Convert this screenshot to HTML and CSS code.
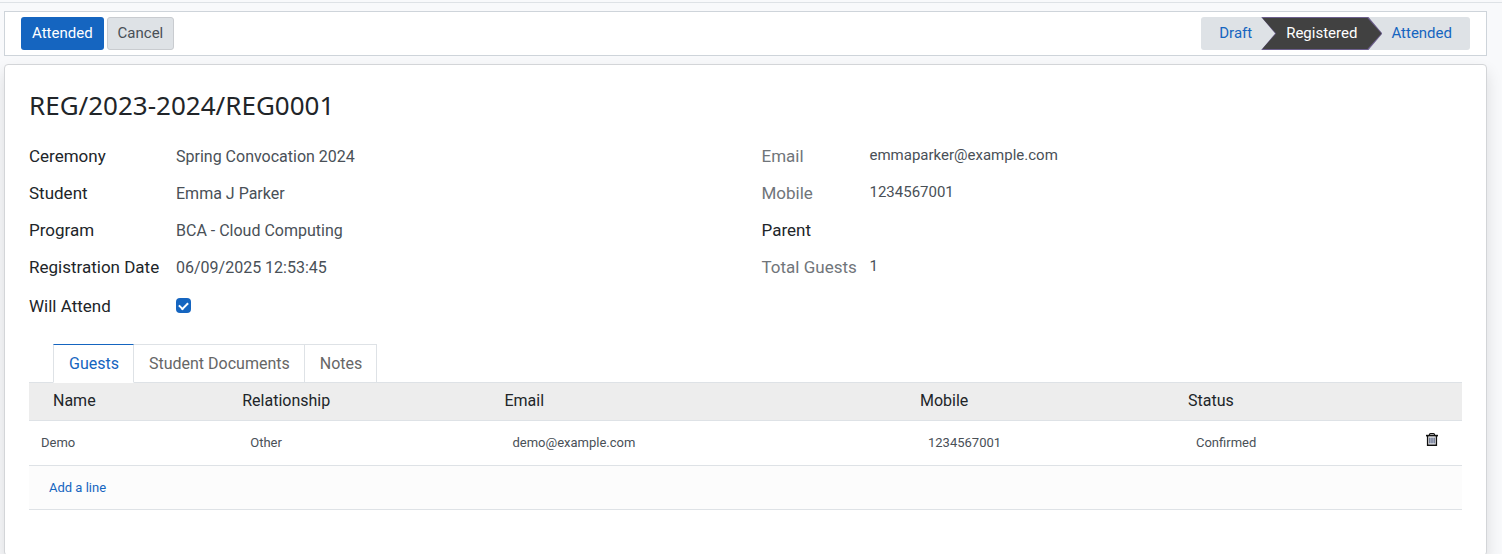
FILE: index.html
```html
<!DOCTYPE html>
<html lang="en">
<head>
    <meta charset="UTF-8">
    <meta name="viewport" content="width=device-width, initial-scale=1.0">
    <title>REG/2023-2024/REG0001</title>
    <link rel="stylesheet" href="styles.css">
</head>
<body>
    <main class="form-view">
        <div class="statusbar">
            <div class="statusbar-buttons">
                <button type="button" class="btn btn-primary">Attended</button>
                <button type="button" class="btn btn-secondary">Cancel</button>
            </div>
            <div class="status-steps">
                <button type="button" class="step step-first">Draft</button>
                <button type="button" class="step step-current" aria-current="step"><span>Registered</span></button>
                <button type="button" class="step step-last">Attended</button>
            </div>
        </div>

        <div class="sheet">
            <h1>REG/2023-2024/REG0001</h1>

            <div class="groups">
                <div class="group group-main">
                    <div class="label">Ceremony</div>
                    <div class="value">Spring Convocation 2024</div>
                    <div class="label">Student</div>
                    <div class="value">Emma J Parker</div>
                    <div class="label">Program</div>
                    <div class="value">BCA - Cloud Computing</div>
                    <div class="label">Registration Date</div>
                    <div class="value">06/09/2025 12:53:45</div>
                    <label class="label" for="will-attend">Will Attend</label>
                    <input type="checkbox" id="will-attend" checked>
                </div>
                <div class="group group-contact">
                    <div class="label readonly">Email</div>
                    <div class="value">emmaparker@example.com</div>
                    <div class="label readonly">Mobile</div>
                    <div class="value">1234567001</div>
                    <div class="label">Parent</div>
                    <div class="value"></div>
                    <div class="label readonly">Total Guests</div>
                    <div class="value">1</div>
                </div>
            </div>

            <div class="tabs" role="tablist">
                <button type="button" class="tab active" role="tab" aria-selected="true">Guests</button>
                <button type="button" class="tab" role="tab" aria-selected="false">Student Documents</button>
                <button type="button" class="tab" role="tab" aria-selected="false">Notes</button>
            </div>

            <table class="guests">
                <thead>
                    <tr>
                        <th class="col-name">Name</th>
                        <th class="col-relationship">Relationship</th>
                        <th class="col-email">Email</th>
                        <th class="col-mobile">Mobile</th>
                        <th class="col-status">Status</th>
                        <th class="col-action"></th>
                    </tr>
                </thead>
                <tbody>
                    <tr>
                        <td>Demo</td>
                        <td>Other</td>
                        <td>demo@example.com</td>
                        <td>1234567001</td>
                        <td>Confirmed</td>
                        <td class="action">
                            <button type="button" class="delete" aria-label="Delete row">
                                <svg width="12" height="13" viewBox="0 0 12 13" fill="none" stroke="#111">
                                    <path d="M0 2.6h12" stroke-width="1.6"/>
                                    <path d="M3.5 2.5V1.6q0-1 1-1h3q1 0 1 1v.9" stroke-width="1.2"/>
                                    <path d="M1.6 3v9.3h8.8V3" stroke-width="1.4"/>
                                    <path d="M3.9 4.5v6M6 4.5v6M8.1 4.5v6" stroke="#3d4a70" stroke-width="1.2"/>
                                </svg>
                            </button>
                        </td>
                    </tr>
                    <tr class="add-row">
                        <td colspan="6"><a href="#">Add a line</a></td>
                    </tr>
                </tbody>
            </table>
        </div>
    </main>
</body>
</html>
```
FILE: styles.css
```css
* {
    box-sizing: border-box;
}
body {
    margin: 0;
    font-family: Roboto, "Liberation Sans", sans-serif;
    font-size: 16px;
    color: #212529;
    background-color: #f8f9fb;
}
button {
    font-family: inherit;
    cursor: pointer;
}
.form-view {
    display: flex;
    flex-direction: column;
    gap: 8px;
    min-height: 100vh;
    margin-top: 2px;
    padding: 8px 15px 0 4px;
    border-top: 1px solid #dee2e6;
    overflow: hidden;
}

/* status bar */
.statusbar {
    display: flex;
    justify-content: space-between;
    padding: 5px 16px;
    background-color: #fff;
    border: 1px solid #ced4da;
}
.statusbar-buttons {
    display: flex;
    gap: 3px;
}
.btn {
    height: 33px;
    padding: 0 10px 2px;
    font-size: 15px;
    border: 1px solid transparent;
    border-radius: 3px;
}
.btn-primary {
    color: #fff;
    background-color: #1565c0;
}
.btn-secondary {
    color: #495057;
    background-color: #dee2e6;
    border-color: #c9ccd0;
}
.status-steps {
    display: flex;
    height: 33px;
    background-color: #dee2e6;
    border-radius: 3px;
}
.step {
    padding: 0;
    font-size: 15px;
    color: #1565c0;
    background: none;
    border: 0;
}
.step-first {
    padding: 0 9px 2px 18px;
}
.step-last {
    padding: 0 18px 2px 9px;
}
.step-current {
    padding: 1px;
    color: #fff;
    background-color: #6c5f8d;
}
.step-current span {
    display: block;
    padding: 0 24px;
    line-height: 31px;
    background-color: #414141;
}
.step-current,
.step-current span {
    clip-path: polygon(0 0, calc(100% - 14px) 0, 100% 50%, calc(100% - 14px) 100%, 0 100%, 14px 50%);
}

/* sheet */
.sheet {
    flex: 1;
    padding: 23px 24px;
    background-color: #fff;
    border: 1px solid #d3d5d8;
    border-radius: 4px;
    box-shadow: 0 8px 16px rgba(0, 0, 0, 0.12);
}
h1 {
    margin: 0 0 14px;
    font-family: "Noto Sans", sans-serif;
    font-size: 26px;
    font-weight: 400;
    line-height: 35px;
}
.groups {
    display: grid;
    grid-template-columns: 1fr 1fr;
    gap: 32px;
    margin-bottom: 18px;
}
.group {
    display: grid;
    grid-template-rows: repeat(4, 37px) 41px;
    align-items: center;
}
.group-main {
    grid-template-columns: 147px 1fr;
}
.group-contact {
    grid-template-columns: 108px 1fr;
}
.label {
    font-size: 17px;
}
.label.readonly {
    color: #70757a;
}
.value {
    color: #495057;
}
.group-main .value {
    padding-top: 2px;
}
.group-contact .value {
    padding-bottom: 2px;
    font-size: 15px;
}
input[type="checkbox"] {
    display: grid;
    place-items: center;
    width: 15px;
    height: 15px;
    margin: 0;
    appearance: none;
    border-radius: 4px;
}
input[type="checkbox"]:checked {
    background-color: #1565c0;
}
input[type="checkbox"]:checked::before {
    content: "";
    width: 7px;
    height: 4px;
    margin-bottom: 2px;
    border: solid #fff;
    border-width: 0 0 2px 2px;
    transform: rotate(-45deg);
}

/* notebook */
.tabs {
    display: flex;
    padding-left: 24px;
    border-bottom: 1px solid #dee2e6;
}
.tab {
    height: 39px;
    margin-bottom: -1px;
    padding: 0 14px 0 15px;
    font-size: 16px;
    color: #666;
    background-color: #fff;
    border: solid #dee2e6;
    border-width: 1px 1px 1px 0;
}
.tab.active {
    color: #1565c0;
    border-left-width: 1px;
    border-top-color: #1565c0;
    border-bottom-color: #fff;
}
.guests {
    width: 100%;
    table-layout: fixed;
    border-collapse: separate;
    border-spacing: 0;
    text-align: left;
}
.guests th {
    height: 38px;
    padding: 0 4px 2px;
    font-weight: 400;
    background-color: #ededed;
    border-bottom: 1px solid #dee2e6;
}
.guests td {
    height: 45px;
    padding: 0 12px 2px;
    font-size: 13px;
    color: #495057;
    border-bottom: 1px solid #dee2e6;
}
.guests .col-name {
    width: 14.6%;
    padding-left: 24px;
}
.col-relationship {
    width: 18.3%;
}
.col-email {
    width: 29%;
}
.col-mobile {
    width: 18.7%;
}
.col-status {
    width: 14%;
}
.guests .action {
    padding: 0 24px 4px 0;
    text-align: right;
}
.delete {
    padding: 0;
    background: none;
    border: 0;
}
.delete svg {
    display: block;
}
.guests .add-row td {
    height: 44px;
    padding: 0 20px;
    background-color: #fcfcfc;
}
a {
    color: #1565c0;
    text-decoration: none;
}
```
